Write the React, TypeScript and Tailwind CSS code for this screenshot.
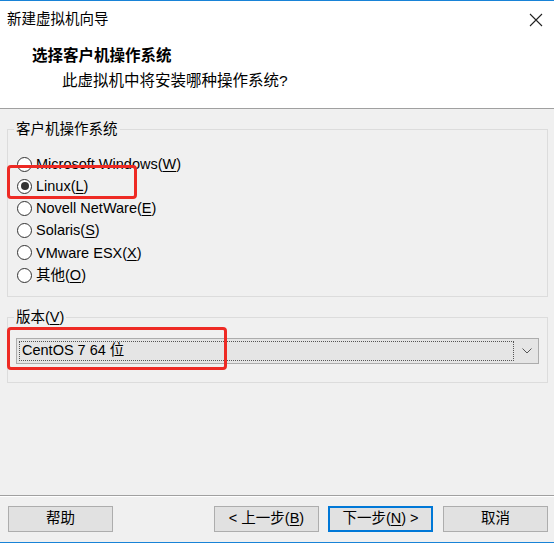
import React from "react";

const FONT = { fontFamily: '"Liberation Sans", "Noto Sans CJK SC", sans-serif' };

function U({ c }: { c: string }) {
  return <span className="underline underline-offset-2">{c}</span>;
}

function Radio({ checked, children }: { checked?: boolean; children: React.ReactNode }) {
  return (
    <div className="flex h-[22.2px] items-center">
      <span className="ml-[9px] flex h-[15px] w-[15px] items-center justify-center rounded-full border border-[#333333] bg-white">
        {checked && <span className="h-[8px] w-[8px] rounded-full bg-[#333333]" />}
      </span>
      <span className="ml-[4px] text-[14.5px] leading-none text-[#000]">{children}</span>
    </div>
  );
}

function Btn({ children, primary }: { children: React.ReactNode; primary?: boolean }) {
  return (
    <div
      className={
        "flex h-[26px] w-[105px] items-center justify-center bg-[#e1e1e1] text-[14.5px] text-black " +
        (primary ? "border-2 border-[#0078d7]" : "border border-[#adadad]")
      }
    >
      {children}
    </div>
  );
}

export default function App() {
  return (
    <div
      className="relative flex h-[543px] w-[554px] flex-col overflow-hidden border-t border-b border-[#1883d7] bg-[#f0f0f0]"
      style={FONT}
    >
      {/* header */}
      <div className="h-[108px] shrink-0 border-b border-[#a0a0a0] bg-white">
        <div className="flex h-[37px] items-center justify-between pl-[7px] pr-[10px]">
          <span className="text-[14.5px] text-black">新建虚拟机向导</span>
          <svg width="14" height="14" viewBox="0 0 14 14" className="mr-[1px]">
            <path d="M1 1 L13 13 M13 1 L1 13" stroke="#222" strokeWidth="1.1" fill="none" />
          </svg>
        </div>
        <div className="mt-[8px] pl-[32px] text-[15.5px] font-bold leading-[20px] text-black">选择客户机操作系统</div>
        <div className="mt-[5px] pl-[62px] text-[15.5px] leading-[20px] text-black">此虚拟机中将安装哪种操作系统?</div>
      </div>

      {/* body */}
      <div className="flex flex-1 flex-col px-[7px] pt-[10px]">
        <fieldset className="w-[541px] border border-[#dcdcdc] pb-[10px]">
          <legend className="ml-[6px] px-[2px] text-[14.5px] leading-[20px] text-black">客户机操作系统</legend>
          <div className="flex flex-col pt-[14px]">
            <Radio>
              Microsoft Windows(<U c="W" />)
            </Radio>
            <Radio checked>
              Linux(<U c="L" />)
            </Radio>
            <Radio>
              Novell NetWare(<U c="E" />)
            </Radio>
            <Radio>
              Solaris(<U c="S" />)
            </Radio>
            <Radio>
              VMware ESX(<U c="X" />)
            </Radio>
            <Radio>
              其他(<U c="O" />)
            </Radio>
          </div>
        </fieldset>

        <fieldset className="mt-[10px] w-[541px] border border-[#dcdcdc] pb-[18px]">
          <legend className="ml-[6px] px-[2px] text-[14.5px] leading-[20px] text-black">
            版本(<U c="V" />)
          </legend>
          <div className="mx-[8px] mt-[11px] flex h-[26px] items-stretch border border-[#acacac] bg-[#e5e5e5]">
            <div className="m-[2px] flex flex-1 items-center border border-dotted border-[#555] pl-[2px] text-[14.5px] text-black">
              CentOS 7 64 位
            </div>
            <div className="flex w-[22px] items-center justify-center">
              <svg width="10" height="6" viewBox="0 0 10 6">
                <path d="M0.5 0.5 L5 5 L9.5 0.5" stroke="#555" strokeWidth="1" fill="none" />
              </svg>
            </div>
          </div>
        </fieldset>
      </div>

      {/* footer */}
      <div className="flex h-[47px] shrink-0 items-center border-t border-[#a0a0a0] pl-[8px] pr-[6px] shadow-[inset_0_1px_0_#ffffff]">
        <Btn>帮助</Btn>
        <div className="flex-1" />
        <Btn>
          &lt; 上一步(<U c="B" />)
        </Btn>
        <div className="w-[9px]" />
        <Btn primary>
          下一步(<U c="N" />) &gt;
        </Btn>
        <div className="w-[10px]" />
        <Btn>取消</Btn>
      </div>

      {/* annotation overlays */}
      <div className="pointer-events-none absolute left-[7px] top-[164px] h-[34px] w-[130px] rounded-[4px] border-[3px] border-[#ee2a24]" />
      <div className="pointer-events-none absolute left-[7px] top-[326px] h-[43px] w-[220px] rounded-[4px] border-[3px] border-[#ee2a24]" />
    </div>
  );
}
